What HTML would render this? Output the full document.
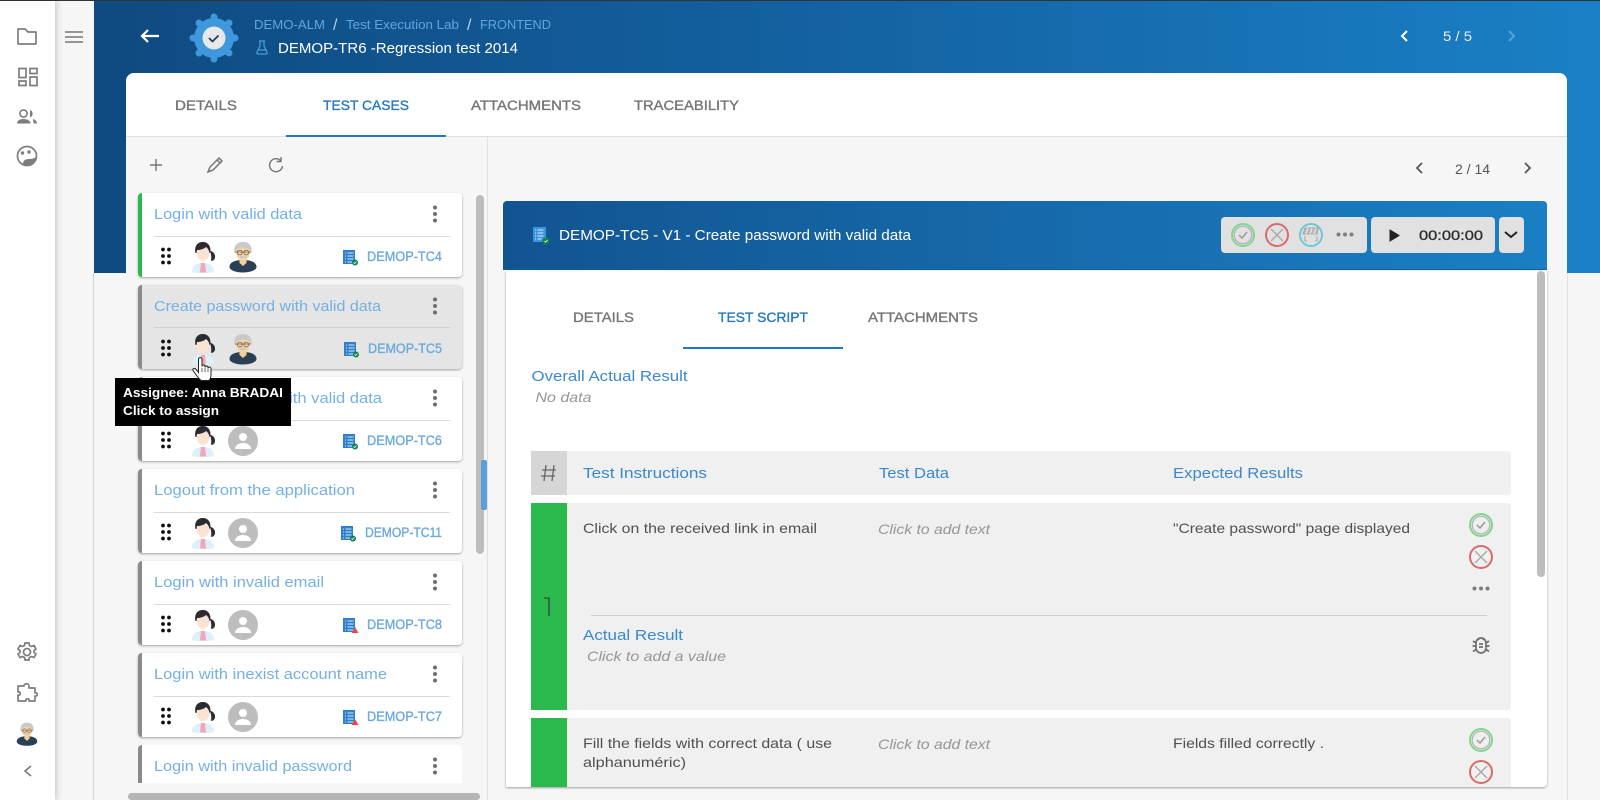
<!DOCTYPE html>
<html><head><meta charset="utf-8"><title>DEMOP-TR6</title>
<style>
html,body{margin:0;padding:0;width:1600px;height:800px;overflow:hidden;background:#f6f6f6}
svg{display:block}
text{font-family:"Liberation Sans",sans-serif}
.t{font-size:15px;fill:#74b0e5}
.id{font-size:13.5px;fill:#6aa9e0;stroke:#6aa9e0;stroke-width:.35px}
.tab{font-size:14px;fill:#757575;stroke:#757575;stroke-width:.35px}
.act{fill:#2378c3;stroke:#2378c3}
.lbl{font-size:15px;fill:#3a88d0}
.b{font-size:14px;fill:#505050}
.i{font-size:14px;font-style:italic;fill:#969696}
.ic{fill:none;stroke:#7d7d7d;stroke-width:1.7}
</style></head><body>
<svg width="1600" height="800" viewBox="0 0 1600 800" xmlns="http://www.w3.org/2000/svg">
<defs>
<linearGradient id="hg" x1="0" x2="1" y1="0" y2="0"><stop offset="0" stop-color="#0f4a80"/><stop offset=".45" stop-color="#13609f"/><stop offset="1" stop-color="#1a80c6"/></linearGradient>
<linearGradient id="pg" x1="0" x2="1" y1="0" y2="0"><stop offset="0" stop-color="#125491"/><stop offset="1" stop-color="#1a7fc4"/></linearGradient>
<filter id="sh" x="-3%" y="-5%" width="106%" height="115%"><feDropShadow dx="0" dy="1" stdDeviation="1" flood-color="#000" flood-opacity=".35"/></filter>
<filter id="sb" x="-50%" y="-5%" width="200%" height="110%"><feDropShadow dx="2" dy="0" stdDeviation="3" flood-color="#000" flood-opacity=".18"/></filter>
<g id="fem">
<path d="M-11 15c0-6 4-9 11-9s11 3 11 9c-5 1.500-17 1.500-22 0z" fill="#dcf0f9"/>
<path d="M-2 6h4l1 9.500h-6z" fill="#f4a6b8"/>
<ellipse cx="0" cy="-5" rx="6.800" ry="9" fill="#fbe3d3"/>
<path d="M-7.500-4c-1.500-7 2-11 7.500-11 5 0 8 4 7.500 10l-1 1c-.5-3-2-5-3.500-6-2 2-6 3-9 3l-.5 3z" fill="#2a2b33"/>
<path d="M7-6c3 0 5.500 3 5 6.500-.5 2.500-2.500 4-4 3 .5-2 .5-5-1-9.500z" fill="#2a2b33"/>
</g>
<g id="mal">
<path d="M-13.500 10c0-5 6-7 13.500-7s13.500 2 13.500 7c0 3-6 5.500-13.500 5.500s-13.500-2.500-13.500-5.500z" fill="#2b3f55"/>
<path d="M-3.500 2h7v4l-3.500 3-3.500-3z" fill="#f3cd9c"/>
<path d="M-7.500-7c0-6 3-8 7.500-8s7.500 2 7.500 8c0 5-3 11-7.500 11s-7.500-6-7.500-11z" fill="#f7d3a4"/>
<path d="M-8.500-4c-1-8 3-11 8.500-11s9.500 3 8.500 11l-1.500-1c0-3-3-4.500-7-4.500s-7 1.500-7 4.500z" fill="#c9c9c9"/>
<path d="M-8-5h16" stroke="#8a6a4a" stroke-width=".8" fill="none"/>
<path d="M-3-.5c1.500-1 4.500-1 6 0v1.500h-6z" fill="#c9c9c9"/>
<circle cx="-3.200" cy="-4.500" r="2.400" fill="none" stroke="#666" stroke-width=".8"/><circle cx="3.200" cy="-4.500" r="2.400" fill="none" stroke="#666" stroke-width=".8"/>
</g>
<g id="ph"><circle r="15" fill="#bdbdbd"/><circle cy="-4" r="4" fill="#fff"/><path d="M-8 8c0-4 4-6 8-6s8 2 8 6z" fill="#fff"/></g>
<g id="drag" fill="#111"><circle cx="-3" cy="-6.500" r="1.900"/><circle cx="3" cy="-6.500" r="1.900"/><circle cx="-3" cy="0" r="1.900"/><circle cx="3" cy="0" r="1.900"/><circle cx="-3" cy="6.500" r="1.900"/><circle cx="3" cy="6.500" r="1.900"/></g>
<g id="keb" fill="#6e6e6e"><circle cy="-6.500" r="2"/><circle r="2"/><circle cy="6.500" r="2"/></g>
<g id="doc"><rect x="-7" y="-7" width="12" height="14" fill="#2d80c9"/><path d="M-5-4h1M-2.500-4h6M-5-1h1M-2.500-1h6M-5 2h1M-2.500 2h6M-5 5h1M-2.500 5h6" stroke="#d5e9f8" stroke-width="1"/></g>
<g id="ok"><use href="#doc"/><circle cx="5" cy="5.500" r="3" fill="#14824d"/><path d="M3.500 5.500l1 1 2-2" stroke="#fff" fill="none" stroke-width=".8"/></g>
<g id="bad"><use href="#doc"/><path d="M5 2l3.500 6h-7z" fill="#e6484a"/></g>
<g id="chk"><circle r="11" fill="#eee" stroke="#7fd68c" stroke-width="2"/><circle r="8.800" fill="none" stroke="#b0b0b0" stroke-width="1.200"/><path d="M-4 0l3 3 5-6" fill="none" stroke="#9a9a9a" stroke-width="1.500"/></g>
<g id="crs"><circle r="11" fill="none" stroke="#db6a6a" stroke-width="2"/><path d="M-6-6L6 6M6-6L-6 6" stroke="#ababab" stroke-width="1.500"/></g>
<g id="dots" fill="#7d7d7d"><circle cx="-6.500" r="2"/><circle r="2"/><circle cx="6.500" r="2"/></g>
</defs>

<!-- page backgrounds -->
<rect x="55" width="1545" height="800" fill="#f6f6f6"/>
<rect x="94" width="1506" height="273" fill="url(#hg)"/>
<rect width="1600" height="1" fill="#333"/>
<rect x="93" y="273" width="1" height="527" fill="#d4d4d4"/>
<rect x="0" y="1" width="55" height="799" fill="#fff" filter="url(#sb)"/>

<!-- sidebar icons -->
<path class="ic" d="M18 29h7l3 3h8v12H18z" stroke-linejoin="round"/>
<path class="ic" d="M19 68.500h7v9h-7zM30 68.500h7v5h-7zM30 77h7v8.500h-7zM19 81h7v4.500h-7z"/>
<g fill="#7d7d7d"><circle cx="23.500" cy="113.500" r="3.600" fill="none" stroke="#7d7d7d" stroke-width="1.600"/><path d="M30 110a4 4 0 0 1 0 7.500z"/><path d="M17 123.500c0-3 3-4.500 6.500-4.500s7 1.500 7 4.500z"/><path d="M33 119c2 .5 4 2 4 4.500h-3.500z"/></g>
<circle class="ic" cx="27" cy="156" r="9.500"/><circle cx="22.500" cy="153" r="1.700" fill="#7d7d7d"/><circle cx="29" cy="152" r="1.700" fill="#7d7d7d"/><path d="M23 164c0-4 3-5 6-5 3 0 6-1 7-2 0 5-3 9-8 9z" fill="#7d7d7d"/>
<path d="M65 32h18M65 37h18M65 42h18" stroke="#767676" stroke-width="1.500"/>
<circle class="ic" cx="27" cy="652" r="3.500"/>
<path class="ic" d="M25 643h4l.5 2.500 2 1 2.500-1 2 3.500-2 1.500v2l2 1.500-2 3.500-2.500-1-2 1-.5 2.500h-4l-.5-2.500-2-1-2.500 1-2-3.500 2-1.500v-2l-2-1.500 2-3.500 2.500 1 2-1z"/>
<path class="ic" d="M24 686c0-3 5-3 5 0v2h6v5c3-1 3 4 0 3v5h-6c1-3-4-3-3 0h-8v-6c3 1 3-4 0-3v-6z" stroke-linejoin="round"/>
<use href="#mal" transform="translate(27 734) scale(.76)"/>
<path d="M31 766l-6 5 6 5" fill="none" stroke="#7d7d7d" stroke-width="1.700"/>

<!-- header -->
<path d="M142 36h17M148 30l-6 6 6 6" fill="none" stroke="#fff" stroke-width="2.200"/>
<g transform="translate(214 38)">
<circle r="20" fill="#3f97dc"/>
<g fill="#3f97dc"><circle cx="0" cy="-21" r="3.500"/><circle cx="0" cy="21" r="3.500"/><circle cx="-21" cy="0" r="3.500"/><circle cx="21" cy="0" r="3.500"/><circle cx="-15" cy="-15" r="3.500"/><circle cx="15" cy="-15" r="3.500"/><circle cx="-15" cy="15" r="3.500"/><circle cx="15" cy="15" r="3.500"/></g>
<circle r="11.500" fill="#e6e8ea"/><path d="M-5 0l3.500 3.500 6-6" fill="none" stroke="#1f3f6a" stroke-width="1.800"/>
</g>
<text x="254" y="29" font-size="13" fill="#63a5dc" textLength="71" lengthAdjust="spacingAndGlyphs">DEMO-ALM</text>
<text x="333" y="30" font-size="16" fill="#b9d4ea">/</text>
<text x="346" y="29" font-size="13" fill="#63a5dc" textLength="113" lengthAdjust="spacingAndGlyphs">Test Execution Lab</text>
<text x="467" y="30" font-size="16" fill="#b9d4ea">/</text>
<text x="480" y="29" font-size="13" fill="#63a5dc" textLength="71" lengthAdjust="spacingAndGlyphs">FRONTEND</text>
<path d="M259 41h6M260 41v5l-3 6c-.5 1 0 2 1 2h8c1 0 1.500-1 1-2l-3-6v-5M258 50h8" fill="none" stroke="#4a9ad8" stroke-width="1.300"/>
<text x="278" y="53" font-size="15" fill="#fff" textLength="240" lengthAdjust="spacingAndGlyphs">DEMOP-TR6 -Regression test 2014</text>
<path d="M1407 31l-5 5 5 5" fill="none" stroke="#fff" stroke-width="2"/>
<text x="1443" y="41" font-size="14" fill="#e6eef5" textLength="29" lengthAdjust="spacingAndGlyphs">5 / 5</text>
<path d="M1509 31l5 5-5 5" fill="none" stroke="#5f9fd0" stroke-width="2"/>

<!-- main card -->
<path d="M126 81a8 8 0 0 1 8-8h1425a8 8 0 0 1 8 8v719H126z" fill="#f6f6f6"/>
<path d="M126 81a8 8 0 0 1 8-8h1425a8 8 0 0 1 8 8v56H126z" fill="#fff"/>
<rect x="126" y="136" width="1441" height="1" fill="#e0e0e0"/>
<rect x="487" y="137" width="1" height="663" fill="#e0e0e0"/>
<rect x="1567" y="273" width="1" height="527" fill="#e0e0e0"/>
<text class="tab" x="175" y="110" textLength="62" lengthAdjust="spacingAndGlyphs">DETAILS</text>
<text class="tab act" x="323" y="110" textLength="86" lengthAdjust="spacingAndGlyphs">TEST CASES</text>
<text class="tab" x="471" y="110" textLength="110" lengthAdjust="spacingAndGlyphs">ATTACHMENTS</text>
<text class="tab" x="634" y="110" textLength="105" lengthAdjust="spacingAndGlyphs">TRACEABILITY</text>
<rect x="286" y="135" width="160" height="2" fill="#2378c3"/>

<!-- left toolbar -->
<path d="M156 159v12M150 165h12" stroke="#757575" stroke-width="1.400"/>
<path d="M208 172l2-5 9-9 3 3-9 9zM217 160l3 3" fill="none" stroke="#757575" stroke-width="1.500"/>
<path d="M281 161a6.500 6.500 0 1 0 1.500 5M281 157v4.500h-4.500" fill="none" stroke="#757575" stroke-width="1.400"/>

<!-- cards -->
<g filter="url(#sh)"><path d="M142 193h316a4 4 0 0 1 4 4v76a4 4 0 0 1-4 4H142a4 4 0 0 1-4-4v-76a4 4 0 0 1 4-4z" fill="#fff"/></g>
<path d="M142 193a4 4 0 0 0-4 4v76a4 4 0 0 0 4 4z" fill="#2bb84d"/>
<g filter="url(#sh)"><path d="M142 285h316a4 4 0 0 1 4 4v76a4 4 0 0 1-4 4H142a4 4 0 0 1-4-4v-76a4 4 0 0 1 4-4z" fill="#e5e5e5"/></g>
<path d="M142 285a4 4 0 0 0-4 4v76a4 4 0 0 0 4 4z" fill="#8a8a8a"/>
<g filter="url(#sh)"><path d="M142 377h316a4 4 0 0 1 4 4v76a4 4 0 0 1-4 4H142a4 4 0 0 1-4-4v-76a4 4 0 0 1 4-4z" fill="#fff"/></g>
<path d="M142 377a4 4 0 0 0-4 4v76a4 4 0 0 0 4 4z" fill="#8a8a8a"/>
<g filter="url(#sh)"><path d="M142 469h316a4 4 0 0 1 4 4v76a4 4 0 0 1-4 4H142a4 4 0 0 1-4-4v-76a4 4 0 0 1 4-4z" fill="#fff"/></g>
<path d="M142 469a4 4 0 0 0-4 4v76a4 4 0 0 0 4 4z" fill="#8a8a8a"/>
<g filter="url(#sh)"><path d="M142 561h316a4 4 0 0 1 4 4v76a4 4 0 0 1-4 4H142a4 4 0 0 1-4-4v-76a4 4 0 0 1 4-4z" fill="#fff"/></g>
<path d="M142 561a4 4 0 0 0-4 4v76a4 4 0 0 0 4 4z" fill="#8a8a8a"/>
<g filter="url(#sh)"><path d="M142 653h316a4 4 0 0 1 4 4v76a4 4 0 0 1-4 4H142a4 4 0 0 1-4-4v-76a4 4 0 0 1 4-4z" fill="#fff"/></g>
<path d="M142 653a4 4 0 0 0-4 4v76a4 4 0 0 0 4 4z" fill="#8a8a8a"/>
<path d="M142 745h316a4 4 0 0 1 4 4v34H138v-34a4 4 0 0 1 4-4z" fill="#fff"/>
<path d="M142 745a4 4 0 0 0-4 4v34h4z" fill="#8a8a8a"/>

<g fill="#d9d9d9"><rect x="154" y="236" width="296" height="1"/><rect x="154" y="327" width="296" height="1" fill="#cfcfcf"/><rect x="154" y="420" width="296" height="1"/><rect x="154" y="512" width="296" height="1"/><rect x="154" y="604" width="296" height="1"/><rect x="154" y="696" width="296" height="1"/></g>

<text class="t" x="154" y="219" textLength="148" lengthAdjust="spacingAndGlyphs">Login with valid data</text>
<text class="t" x="154" y="311" textLength="227" lengthAdjust="spacingAndGlyphs">Create password with valid data</text>
<text class="t" x="154" y="403" textLength="228" lengthAdjust="spacingAndGlyphs">Reset password with valid data</text>
<text class="t" x="154" y="495" textLength="201" lengthAdjust="spacingAndGlyphs">Logout from the application</text>
<text class="t" x="154" y="587" textLength="170" lengthAdjust="spacingAndGlyphs">Login with invalid email</text>
<text class="t" x="154" y="679" textLength="233" lengthAdjust="spacingAndGlyphs">Login with inexist account name</text>
<text class="t" x="154" y="771" textLength="198" lengthAdjust="spacingAndGlyphs">Login with invalid password</text>

<use href="#keb" x="435" y="214"/><use href="#keb" x="435" y="306"/><use href="#keb" x="435" y="398"/><use href="#keb" x="435" y="490"/><use href="#keb" x="435" y="582"/><use href="#keb" x="435" y="674"/><use href="#keb" x="435" y="766"/>
<use href="#drag" x="166" y="256"/><use href="#drag" x="166" y="348"/><use href="#drag" x="166" y="440"/><use href="#drag" x="166" y="532"/><use href="#drag" x="166" y="624"/><use href="#drag" x="166" y="716"/>
<use href="#fem" x="203" y="257"/><use href="#fem" x="203" y="349"/><use href="#fem" x="203" y="441"/><use href="#fem" x="203" y="533"/><use href="#fem" x="203" y="625"/><use href="#fem" x="203" y="717"/>
<use href="#mal" x="243" y="257"/><use href="#mal" x="243" y="349"/><use href="#ph" x="243" y="441"/><use href="#ph" x="243" y="533"/><use href="#ph" x="243" y="625"/><use href="#ph" x="243" y="717"/>

<use href="#ok" x="350" y="257"/><text class="id" x="367" y="261" textLength="75" lengthAdjust="spacingAndGlyphs">DEMOP-TC4</text>
<use href="#ok" x="351" y="349"/><text class="id" x="368" y="353" textLength="74" lengthAdjust="spacingAndGlyphs">DEMOP-TC5</text>
<use href="#ok" x="350" y="441"/><text class="id" x="367" y="445" textLength="75" lengthAdjust="spacingAndGlyphs">DEMOP-TC6</text>
<use href="#ok" x="348" y="533"/><text class="id" x="365" y="537" textLength="77" lengthAdjust="spacingAndGlyphs">DEMOP-TC11</text>
<use href="#bad" x="350" y="625"/><text class="id" x="367" y="629" textLength="75" lengthAdjust="spacingAndGlyphs">DEMOP-TC8</text>
<use href="#bad" x="350" y="717"/><text class="id" x="367" y="721" textLength="75" lengthAdjust="spacingAndGlyphs">DEMOP-TC7</text>

<!-- tooltip and cursor -->
<rect x="115" y="378" width="176" height="48" fill="#000"/>
<text x="123" y="397" font-size="13" font-weight="700" fill="#fff" textLength="160" lengthAdjust="spacingAndGlyphs">Assignee: Anna BRADAI</text>
<text x="123" y="415" font-size="13" font-weight="700" fill="#fff" textLength="96" lengthAdjust="spacingAndGlyphs">Click to assign</text>
<path d="M198.500 359.500c0-2.500 3.500-2.500 3.500 0v7c0-2 3-2 3 0v1c0-2 3-2 3 0v1c0-2 3-2 3 .5v5.500c0 3-1 5-2 6h-8c-2-2-6-7-8-10-1-2 2-3 3-1l2.500 3z" fill="#fff" stroke="#222" stroke-width="1"/>
<path d="M202 372v-4M205 372v-4M208 372v-3" stroke="#222" stroke-width=".7"/>

<!-- left scrollbars -->
<rect x="476" y="195" width="8" height="359" rx="4" fill="#bdbdbd"/>
<rect x="481" y="460" width="6" height="50" rx="2" fill="#5b9fd6"/>
<rect x="128" y="793" width="352" height="7" rx="3.500" fill="#b5b5b5"/>

<!-- right pager -->
<path d="M1422 163l-5 5 5 5" fill="none" stroke="#555" stroke-width="1.800"/>
<text x="1455" y="174" font-size="14" fill="#555" textLength="35" lengthAdjust="spacingAndGlyphs">2 / 14</text>
<path d="M1525 163l5 5-5 5" fill="none" stroke="#555" stroke-width="1.800"/>

<!-- panel -->
<g filter="url(#sh)"><path d="M506 271h1041v512a4 4 0 0 1-4 4H506z" fill="#fff"/></g>
<path d="M507 201h1036a4 4 0 0 1 4 4v65H503v-65a4 4 0 0 1 4-4z" fill="url(#pg)"/>
<rect x="503" y="269" width="1044" height="1" fill="#0f5f9e"/>
<g transform="translate(540 235)"><rect x="-7" y="-8" width="13" height="15" fill="#3d93dd"/><path d="M-5-5h1M-2.500-5h6M-5-2h1M-2.500-2h6M-5 1h1M-2.500 1h6M-5 4h1M-2.500 4h4" stroke="#dcedfa" stroke-width="1"/><circle cx="6" cy="6" r="3.500" fill="#14824d"/><path d="M4.500 6l1 1 2-2" stroke="#fff" fill="none" stroke-width=".8"/></g>
<text x="559" y="240" font-size="14.500" fill="#fff" textLength="352" lengthAdjust="spacingAndGlyphs">DEMOP-TC5 - V1 - Create password with valid data</text>

<rect x="1221" y="217" width="146" height="36" rx="4" fill="#e1e1e1"/>
<rect x="1371" y="217" width="124" height="36" rx="4" fill="#e1e1e1"/>
<rect x="1499" y="217" width="25" height="36" rx="4" fill="#e1e1e1"/>
<g transform="translate(1243 235)"><circle r="11" fill="none" stroke="#7fd68c" stroke-width="2"/><circle r="8.800" fill="none" stroke="#b0b0b0" stroke-width="1.200"/><path d="M-4 0l3 3 5-6" fill="none" stroke="#9a9a9a" stroke-width="1.500"/></g>
<use href="#crs" x="1277" y="235"/>
<g transform="translate(1311 235)"><circle r="11" fill="none" stroke="#6cc9d6" stroke-width="2"/><path d="M-8-1l2-6h13l-1 6zM-6 1v5M6 1v5M-6 6h2M4 6h2" fill="#b5b5b5" stroke="#a5a5a5" stroke-width="1"/><path d="M-3-7l-2 6M1-7l-2 6M5-7l-2 6" stroke="#e1e1e1" stroke-width="1.500"/></g>
<use href="#dots" x="1345" y="234.500"/>
<path d="M1390 230l9 5.500-9 5.500z" fill="#222" stroke="#222" stroke-width="1"/>
<text x="1419" y="240" font-size="14" fill="#2d2d2d" stroke="#2d2d2d" stroke-width=".35" textLength="64" lengthAdjust="spacingAndGlyphs">00:00:00</text>
<path d="M1505 232l6 5 6-5" fill="none" stroke="#222" stroke-width="2"/>

<rect x="1537" y="271" width="8" height="306" rx="4" fill="#bdbdbd"/>

<text class="tab" x="573" y="322" textLength="61" lengthAdjust="spacingAndGlyphs">DETAILS</text>
<text class="tab act" x="718" y="322" textLength="90" lengthAdjust="spacingAndGlyphs">TEST SCRIPT</text>
<text class="tab" x="868" y="322" textLength="110" lengthAdjust="spacingAndGlyphs">ATTACHMENTS</text>
<rect x="683" y="347" width="160" height="2" fill="#2378c3"/>

<text class="lbl" x="531.500" y="381" textLength="156" lengthAdjust="spacingAndGlyphs">Overall Actual Result</text>
<text class="i" x="535.500" y="402" textLength="56" lengthAdjust="spacingAndGlyphs">No data</text>

<!-- table head -->
<rect x="531" y="451" width="980" height="44" rx="3" fill="#f0f0f0"/>
<rect x="531" y="451" width="36" height="44" fill="#d6d6d6"/>
<path d="M546 465l-2 16M554 465l-2 16M542 470h14M541 476h14" stroke="#666" stroke-width="1.300" fill="none"/>
<text class="lbl" x="583" y="478" textLength="124" lengthAdjust="spacingAndGlyphs">Test Instructions</text>
<text class="lbl" x="879" y="478" textLength="70" lengthAdjust="spacingAndGlyphs">Test Data</text>
<text class="lbl" x="1173" y="478" textLength="130" lengthAdjust="spacingAndGlyphs">Expected Results</text>

<!-- row 1 -->
<rect x="531" y="503" width="980" height="207" rx="3" fill="#f0f0f0"/>
<rect x="531" y="503" width="36" height="207" fill="#2bb84d"/>
<path d="M544 598h5v18" fill="none" stroke="#333" stroke-width="1.100"/>
<text class="b" x="583" y="533" textLength="234" lengthAdjust="spacingAndGlyphs">Click on the received link in email</text>
<text class="i" x="878" y="534" textLength="112" lengthAdjust="spacingAndGlyphs">Click to add text</text>
<text class="b" x="1173" y="533" textLength="237" lengthAdjust="spacingAndGlyphs">"Create password" page displayed</text>
<use href="#chk" x="1481" y="525"/><use href="#crs" x="1481" y="557"/><use href="#dots" x="1481" y="588.500"/>
<rect x="591" y="615" width="896" height="1" fill="#cfcfcf"/>
<text class="lbl" x="583" y="640" textLength="100" lengthAdjust="spacingAndGlyphs">Actual Result</text>
<text class="i" x="587" y="661" textLength="139" lengthAdjust="spacingAndGlyphs">Click to add a value</text>
<g transform="translate(1481 646)" fill="none" stroke="#6f6f6f" stroke-width="1.700"><path d="M-5-3a5 5 0 0 1 10 0v5a5 5 0 0 1-10 0z"/><path d="M-8-5l3 2M8-5l-3 2M-8.500 0h3.500M8.500 0h-3.500M-8 5.500l3-2M8 5.500l-3-2M-3-8l1 2M3-8l-1 2M-2-2h4M-2 1h4"/></g>

<!-- row 2 -->
<path d="M531 718h977a3 3 0 0 1 3 3v66H531z" fill="#f0f0f0"/>
<rect x="531" y="718" width="36" height="69" fill="#2bb84d"/>
<text class="b" x="583" y="748" textLength="249" lengthAdjust="spacingAndGlyphs">Fill the fields with correct data ( use</text>
<text class="b" x="583" y="767" textLength="103" lengthAdjust="spacingAndGlyphs">alphanuméric)</text>
<text class="i" x="878" y="749" textLength="112" lengthAdjust="spacingAndGlyphs">Click to add text</text>
<text class="b" x="1173" y="748" textLength="151" lengthAdjust="spacingAndGlyphs">Fields filled correctly .</text>
<use href="#chk" x="1481" y="740"/><use href="#crs" x="1481" y="772"/>
</svg>
</body></html>
